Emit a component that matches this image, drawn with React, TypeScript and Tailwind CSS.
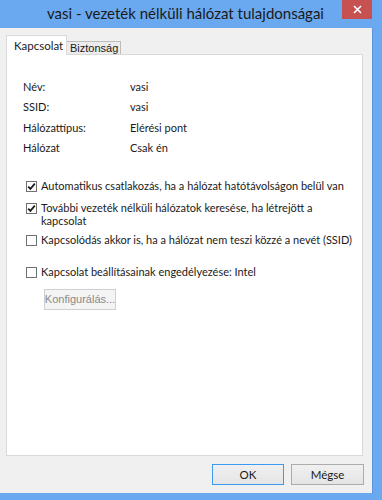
import React from "react";

const ui = { fontFamily: 'Lato, "Noto Sans", sans-serif' };
const tah = { fontFamily: '"Liberation Sans", Arial, sans-serif' };

function Check({ checked }: { checked: boolean }) {
  return (
    <div className="w-[11px] h-[11px] border border-[#707070] bg-white shrink-0 flex items-center justify-center">
      {checked && (
        <svg width="9" height="9" viewBox="0 0 9 9">
          <path d="M1.2 4.6 L3.4 6.9 L7.8 1.6" fill="none" stroke="#1a1a1a" strokeWidth="1.7" />
        </svg>
      )}
    </div>
  );
}

export default function App() {
  const rows: [string, string][] = [
    ["Név:", "vasi"],
    ["SSID:", "vasi"],
    ["Hálózattípus:", "Elérési pont"],
    ["Hálózat", "Csak én"],
  ];
  return (
    <div className="w-[382px] h-[500px] bg-[#6aa9ef] flex flex-col overflow-hidden" style={ui}>
      <div className="h-[28px] flex shrink-0">
        <div className="pl-[47px] pt-[3px] text-[15px] leading-[20px] text-[#1a1a1a] whitespace-nowrap">
          vasi - vezeték nélküli hálózat tulajdonságai
        </div>
        <div className="ml-auto mr-[10px] w-[30px] h-[19px] bg-[#c75050] flex items-center justify-center">
          <svg width="9" height="9" viewBox="0 0 9 9">
            <path d="M1 1 L8 8 M8 1 L1 8" stroke="#ffffff" strokeWidth="1.6" />
          </svg>
        </div>
      </div>
      <div className="w-[373px] h-[465px] bg-[#f0f0f0] border-r border-[#5b94d8] flex flex-col">
        <div className="h-[19px] mt-[7px] ml-[6px] flex items-end">
          <div className="h-[20px] w-[61px] -mb-px bg-white border-l border-t border-r border-[#d9d9d9] relative z-10 text-[11.5px] leading-[20px] text-[#1a1a1a] pl-[7px] whitespace-nowrap">
            Kapcsolat
          </div>
          <div className="h-[13px] w-[54px] bg-[#ececec] border-t border-r border-[#bdbdbd] text-[11px] leading-[12px] text-[#1a1a1a] pl-[3px] whitespace-nowrap" style={tah}>
            Biztonság
          </div>
        </div>
        <div className="ml-[6px] w-[357px] h-[402px] bg-white border border-[#d9d9d9] flex flex-col text-[11px] text-[#1a1a1a] whitespace-nowrap">
          <div className="pt-[22px] pl-[16px] flex flex-col">
            {rows.map(([k, v]) => (
              <div key={k} className="h-[20.4px] flex items-center">
                <div className="w-[107px]">{k}</div>
                <div>{v}</div>
              </div>
            ))}
          </div>
          <div className="mt-[18px] pl-[19px] pr-[8px] flex flex-col">
            <div className="flex items-start gap-[4px]">
              <div className="mt-[4px]"><Check checked /></div>
              <div className="leading-[18px]">Automatikus csatlakozás, ha a hálózat hatótávolságon belül van</div>
            </div>
            <div className="flex items-start gap-[4px] mt-[4px]">
              <div className="mt-[4px]"><Check checked /></div>
              <div className="leading-[13px] pt-[2px]">
                További vezeték nélküli hálózatok keresése, ha létrejött a
                <br />
                kapcsolat
              </div>
            </div>
            <div className="flex items-start gap-[4px] mt-[4px]">
              <div className="mt-[4px]"><Check checked={false} /></div>
              <div className="leading-[18px]">Kapcsolódás akkor is, ha a hálózat nem teszi közzé a nevét (SSID)</div>
            </div>
            <div className="flex items-start gap-[4px] mt-[14px]">
              <div className="mt-[4px]"><Check checked={false} /></div>
              <div className="leading-[18px]">Kapcsolat beállításainak engedélyezése: Intel</div>
            </div>
            <div className="mt-[8px] ml-[18px] w-[72px] h-[21px] bg-[#f4f4f4] border border-[#cfcfcf] flex items-center justify-center text-[11px] text-[#8a8a8a]" style={tah}>
              Konfigurálás...
            </div>
          </div>
        </div>
        <div className="mt-[8px] mr-[8px] flex justify-end gap-[7px]">
          <div className="w-[72px] h-[21px] border border-[#3c9bf0] bg-gradient-to-b from-[#f0f0f0] to-[#e5e5e5] flex items-center justify-center text-[11.5px] text-[#1a1a1a]">
            OK
          </div>
          <div className="w-[73px] h-[21px] border border-[#acacac] bg-gradient-to-b from-[#f0f0f0] to-[#e5e5e5] flex items-center justify-center text-[11.5px] text-[#1a1a1a]">
            Mégse
          </div>
        </div>
      </div>
    </div>
  );
}
